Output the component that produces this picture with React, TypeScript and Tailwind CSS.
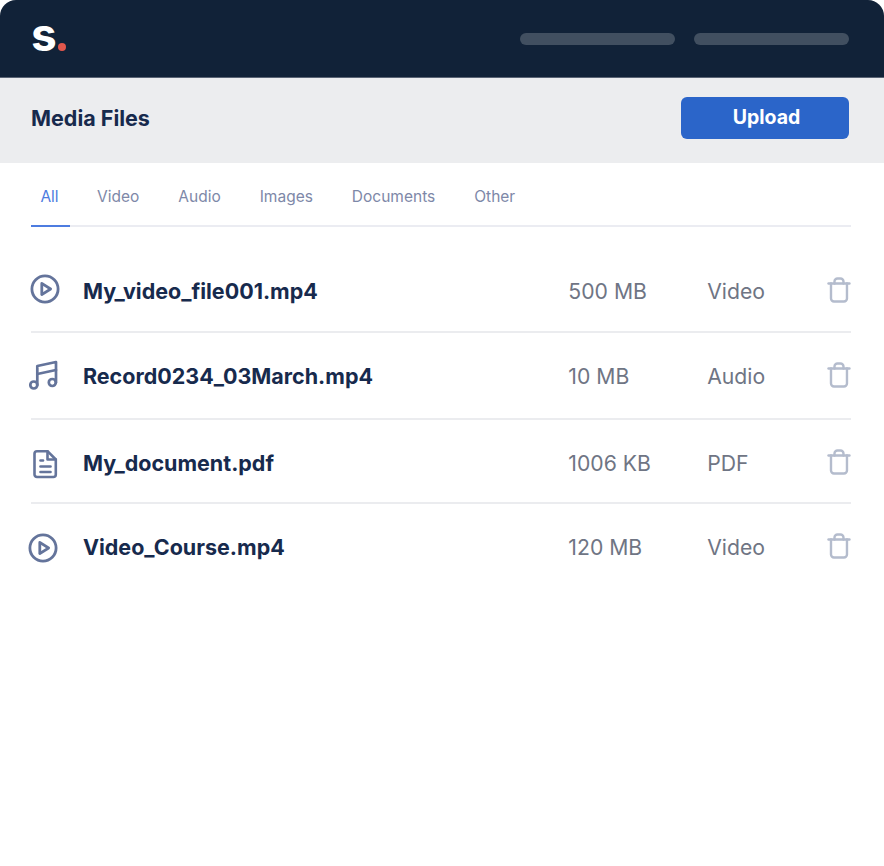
import React from 'react';

type Kind = 'video' | 'audio' | 'doc';

interface FileRow {
    name: string;
    size: string;
    type: string;
    kind: Kind;
    rowClass: string;
    iconClass: string;
}

const tabs = ['All', 'Video', 'Audio', 'Images', 'Documents', 'Other'];

const files: FileRow[] = [
    { name: 'My_video_file001.mp4', size: '500 MB', type: 'Video', kind: 'video', rowClass: 'h-[83px] pt-[1px]', iconClass: 'ml-[-1px] mt-[-4px]' },
    { name: 'Record0234_03March.mp4', size: '10 MB', type: 'Audio', kind: 'audio', rowClass: 'h-[87px] pt-[1px]', iconClass: 'ml-[-2px] mt-[-2px]' },
    { name: 'My_document.pdf', size: '1006 KB', type: 'PDF', kind: 'doc', rowClass: 'h-[84px] pt-[3px]', iconClass: 'ml-[2px] mt-[2px]' },
    { name: 'Video_Course.mp4', size: '120 MB', type: 'Video', kind: 'video', rowClass: 'h-[87px] pb-[2px]', iconClass: 'ml-[-3px] mt-[2px]' },
];

const PlayIcon = ({ className }: { className: string }) => (
    <svg width="30" height="30" viewBox="0 0 30 30" fill="none" stroke="#64749b" strokeWidth="2.8" strokeLinecap="round" strokeLinejoin="round" className={className}>
        <circle cx="15" cy="15" r="13.1" />
        <path d="M11.8 9.4L20.6 15l-8.8 5.6z" />
    </svg>
);

const MusicIcon = ({ className }: { className: string }) => (
    <svg width="30" height="30" viewBox="0 0 30 30" fill="none" stroke="#64749b" strokeWidth="2.7" strokeLinecap="round" strokeLinejoin="round" className={className}>
        <circle cx="4.8" cy="25" r="3.5" />
        <circle cx="23.3" cy="22.5" r="3.5" />
        <path d="M8.3 25V6L27 2v20.5" />
        <path d="M8.3 14L27 10" />
    </svg>
);

const DocIcon = ({ className }: { className: string }) => (
    <svg width="25" height="30" viewBox="0 0 25 30" fill="none" stroke="#64749b" strokeWidth="2.6" strokeLinecap="round" strokeLinejoin="round" className={className}>
        <path d="M4 2.2h10.5l8.3 8.3V25.5a2.5 2.5 0 0 1-2.5 2.5H4a2.5 2.5 0 0 1-2.5-2.5V4.7A2.5 2.5 0 0 1 4 2.2z" />
        <path d="M14.5 2.2v8.3h8.3" />
        <path d="M7.5 11.5h2.5" />
        <path d="M7.5 17.5h10" />
        <path d="M7.5 23h10" />
    </svg>
);

const TrashIcon = () => (
    <svg width="24" height="26" viewBox="0 0 24 26" fill="none" stroke="#b4bccd" strokeWidth="2.4" strokeLinecap="round" strokeLinejoin="round" className="mt-[-2px]">
        <path d="M1.5 6.5h21" />
        <path d="M7.5 6.5V4.5a3 3 0 0 1 3-3h3a3 3 0 0 1 3 3v2" />
        <path d="M4 6.5v15a3 3 0 0 0 3 3h10a3 3 0 0 0 3-3v-15" />
    </svg>
);

const KindIcon = ({ kind, className }: { kind: Kind; className: string }) => {
    if (kind === 'audio') return <MusicIcon className={className} />;
    if (kind === 'doc') return <DocIcon className={className} />;
    return <PlayIcon className={className} />;
};

export default function App() {
    return (
        <div className="h-[866px] w-[884px] overflow-hidden bg-white font-['Inter',sans-serif]">
            <div className="h-full overflow-hidden rounded-[16px] bg-white">
                {/* Top bar */}
                <header className="flex h-[78px] items-center justify-between border-b border-[#5a6475] bg-[#112238] pl-[31px] pr-[35px]">
                    <div className="mb-[9px] flex h-[46px] items-end">
                        <span className="text-[46px] font-bold leading-[46px] text-white">s</span>
                        <span className="mb-[6px] ml-[1px] h-[8px] w-[8px] rounded-full bg-[#e2574c]" />
                    </div>
                    <div className="flex gap-[19px]">
                        <div className="h-[12px] w-[155px] rounded-full bg-[#414f60]" />
                        <div className="h-[12px] w-[155px] rounded-full bg-[#414f60]" />
                    </div>
                </header>

                {/* Title row */}
                <div className="flex h-[85px] items-center justify-between bg-[#ecedef] pl-[31px] pr-[35px]">
                    <h1 className="mb-[4px] text-[21.5px] font-bold text-[#172a4d]">Media Files</h1>
                    <button className="mb-[5px] h-[42px] w-[168px] rounded-[6px] bg-[#2b65c9] pl-[3px] text-[19.5px] font-bold text-white">
                        Upload
                    </button>
                </div>

                <div className="pl-[31px] pr-[33px]">
                    {/* Tabs */}
                    <nav className="flex h-[64px] border-b-2 border-[#ebecf2]">
                        {tabs.map((tab, i) => (
                            <div
                                key={tab}
                                className={`-mb-[2px] flex items-center text-[15.5px] ${i === 0 ? 'w-[39px] justify-center border-b-2 border-[#4d7ce0] pr-[2px] pt-[6px] text-[#4d7ce0]' : 'pt-[4px] text-[#7e88a8] ' + (i === 1 ? 'ml-[27px]' : 'ml-[39px]')}`}
                            >
                                {tab}
                            </div>
                        ))}
                    </nav>

                    {/* Files */}
                    <div className="pt-[23px]">
                        {files.map((file, i) => (
                            <div
                                key={file.name}
                                className={`flex items-center ${file.rowClass} ${i < files.length - 1 ? 'border-b-2 border-[#ebecef]' : ''}`}
                            >
                                <div className="flex w-[52px] items-center">
                                    <KindIcon kind={file.kind} className={file.iconClass} />
                                </div>
                                <div className="w-[486px] text-[21.5px] font-bold leading-[32px] text-[#172a4d]">{file.name}</div>
                                <div className="w-[139px] text-[21.2px] leading-[32px] text-[#6f7584]">{file.size}</div>
                                <div className="w-[120px] text-[21.2px] leading-[32px] text-[#6f7584]">{file.type}</div>
                                <TrashIcon />
                            </div>
                        ))}
                    </div>
                </div>
            </div>
        </div>
    );
}
